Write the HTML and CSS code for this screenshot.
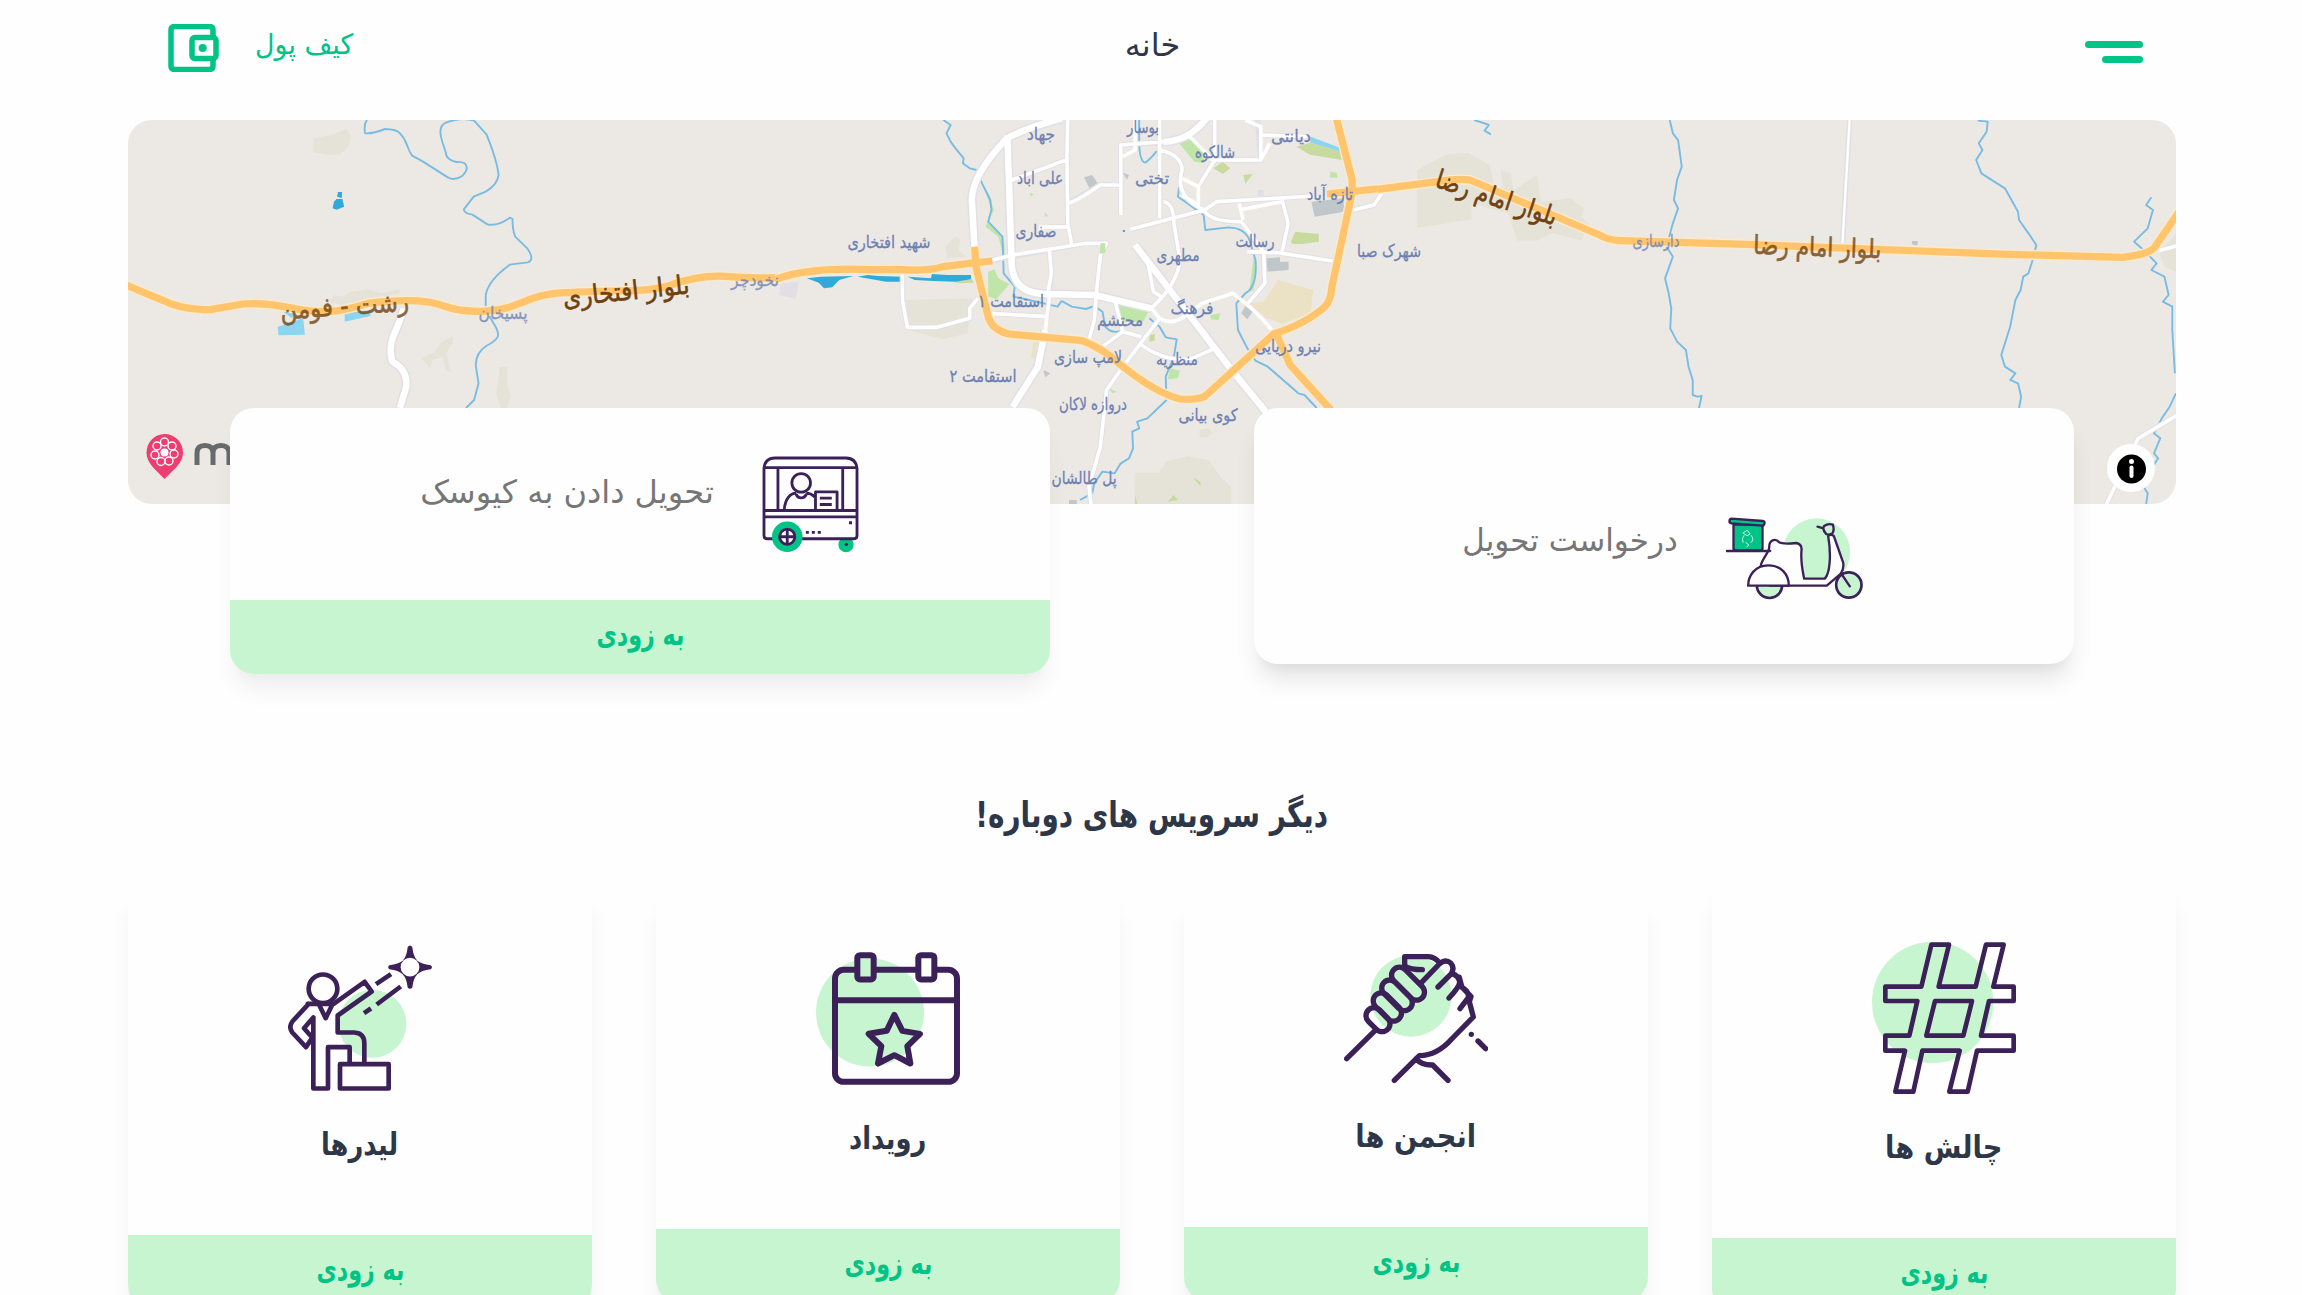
FILE: index.html
```html
<!DOCTYPE html>
<html lang="fa" dir="rtl">
<head>
<meta charset="utf-8">
<title>خانه</title>
<link rel="stylesheet" href="styles.css">
</head>
<body>
<div class="page">
  <header class="topbar">
    <button class="menu" aria-label="منو"><span class="menu-line"></span><span class="menu-line short"></span></button>
    <h1 class="title">خانه</h1>
    <a class="wallet" href="#">
      <span class="wallet-label">کیف پول</span>
      <svg class="wallet-icon" viewBox="0 0 51 48"><path d="M45 13V6Q45 2.5 41 2.5H7Q3 2.5 3 6V42Q3 45.500 7 45.500H41Q45 45.500 45 42V35"/><rect x="24" y="13.500" width="24" height="21" rx="3"/><circle cx="34.700" cy="24" r="4"/></svg>
    </a>
  </header>

  <section class="map">
    <svg class="map-canvas" viewBox="0 0 2048 384" direction="ltr">
      <!-- west of the city -->
      <g transform="translate(-28 -120) scale(.44643 .33333)">
        <path class="land" d="M478 415L520 404 552 386 563 412 556 440 536 464 505 464 478 456ZM510 905L525 885 545 890 560 875 600 868 630 880 670 868 672 880 600 900 540 915ZM720 1075L750 1055 765 1025 790 1008 790 1030 776 1060 788 1120 775 1110 768 1070 745 1080 740 1105ZM895 1100H912V1150L920 1190 912 1224H898L888 1185Z"/>
        <path class="lake" d="M531 590L533 576H542V594ZM524 605L530 597H543L547 620 530 629 521 625Z"/>
        <path class="pond" d="M398 980L455 955 459 1004 400 1006ZM548 940L606 930V948L548 965ZM410 935L440 930 430 955Z"/>
        <path class="plot" d="M1528 850L1564 845 1558 895 1521 885Z"/>
        <path class="river" d="M598 360Q590 375 594 400Q610 402 638 387Q665 388 672 400C690 425 685 440 699 467L720 482 780 533Q795 543 812 527Q828 505 817 490Q808 484 798 486Q775 480 774 455C762 410 755 380 775 368Q810 350 838 362L866 404C880 450 890 490 893 525Q890 555 864 575L837 590 815 628Q815 640 834 644L868 673Q890 680 918 653L924 657Q924 690 930 710L957 745Q975 780 958 787L918 794Q870 840 864 885V920C870 960 895 980 891 1010Q885 1025 865 1038Q840 1060 842 1100L848 1150 838 1200 820 1224"/>
        <path class="road-edge wide" d="M680 925C670 990 640 1020 655 1085Q690 1110 686 1160L672 1224"/>
        <path class="road wide" d="M680 925C670 990 640 1020 655 1085Q690 1110 686 1160L672 1224"/>
        <path class="highway-edge" d="M40 845L130 895Q190 935 250 928L320 912Q370 907 420 922C500 945 540 935 600 910Q720 890 770 918C830 945 900 935 940 910Q1000 875 1050 878C1150 868 1230 880 1280 855Q1340 825 1400 829C1470 835 1530 840 1580 815"/>
        <path class="highway" d="M40 845L130 895Q190 935 250 928L320 912Q370 907 420 922C500 945 540 935 600 910Q720 890 770 918C830 945 900 935 940 910Q1000 875 1050 878C1150 868 1230 880 1280 855Q1340 825 1400 829C1470 835 1530 840 1580 815"/>
      </g>
      <!-- city -->
      <g transform="translate(652 -20) scale(.40816 .33333)">
        <path class="land" d="M405 440L430 408 442 420 438 450 455 470 410 475ZM305 600L470 595 460 700 400 718 312 690ZM868 1118H930L945 1085 1000 1068 1050 1080 1080 1130 1105 1160V1212H868ZM1027 990L1050 984 1060 1000 1045 1014 1028 1010Z"/>
        <path class="sand" d="M1150 610L1185 605 1220 540 1306 570 1300 640 1230 672 1185 650ZM620 725H632L625 775H615Z"/>
        <path class="park" d="M975 125L1005 112 1035 140 1040 190 1015 185ZM510 515L525 508 535 535 562 553 530 597 510 590ZM822 605L905 630 890 665 835 665ZM495 245L515 290 524 330 510 370 535 395 550 430V480L535 410 503 380 520 335ZM956 805L980 812 975 835 950 838ZM1055 645L1078 640 1075 660 1055 658ZM1348 215L1365 218V233H1348ZM1160 470L1168 500 1160 570 1150 575ZM805 865L825 875 815 880ZM648 335L657 348 650 350ZM612 278L622 283 615 290Z"/>
        <path class="grass" d="M1265 140L1300 128 1376 155V180L1330 170 1300 165ZM1062 205L1085 185 1103 205 1085 222ZM1252 425L1262 395 1320 402V425L1280 432 1255 432ZM1135 225L1158 222 1140 252ZM905 705L918 702V722L905 725ZM425 545L470 538 475 548 440 550ZM1010 1130L1030 1145V1158ZM870 1185L876 1212H870ZM950 1205L965 1185 975 1200Z"/>
        <path class="building" d="M745 232L765 225 778 250 758 265ZM1302 305L1380 295 1383 335 1310 350ZM1189 475L1225 472V485H1246V510L1195 515ZM1130 640L1140 618 1158 635 1145 658ZM840 218L855 225 850 240ZM645 810L662 820 650 832ZM708 1200H727V1212H708Z"/>
        <path class="plot" d="M0 555L45 560 38 597 0 585ZM1170 270H1185V288H1170Z"/>
        <path class="lake" d="M66 535L100 530 180 528 145 540 128 562 108 565 95 548ZM190 530L215 525 240 528 300 530 295 545 260 545ZM313 530L370 535 372 522 410 525 468 525V538L430 545 375 543 330 540ZM840 390H845V396H840Z"/>
        <path class="pond" d="M1300 110L1375 145V155L1300 128Z"/>
        <path class="river" d="M400 60L418 75 408 100 418 125 430 145 450 175 448 190 465 205 482 210 495 250 515 300 518 330 510 365 545 410 548 520 575 560 572 590 610 600 680 620 690 603 715 620 750 627 770 618 790 635 797 680Q815 705 840 690M880 60V120Q880 185 895 188Q905 180 922 155H945Q985 175 982 210L975 290Q1010 320 1038 345L1042 390 1100 382Q1140 385 1150 420L1165 480Q1170 560 1140 580L1118 610 1122 690 1145 745 1165 782 1195 800 1270 880 1285 885 1315 924M905 655L930 680 945 712 972 718 965 770 945 830 947 900 900 955 875 965 880 985 863 995 865 1045 855 1075 835 1090 820 1120 790 1115 770 1150 765 1180 735 1200"/>
        <path class="road-edge wide" d="M690 55Q600 85 556 115Q470 225 470 300L477 450M557 105L568 500Q575 580 650 582L770 585 910 625M650 690L632 800 570 920M870 435L1110 815 1190 935M1045 55Q1000 125 940 125"/>
        <path class="road-edge" d="M705 60L703 170 705 370 715 435M568 240L705 178M520 480L750 430 800 430 785 465 775 580 770 660 757 720M705 310L785 255H835M835 345V135L940 125M930 60V355M858 388L1040 330 1070 305 1310 288M1065 60L1065 180 1025 260M1170 60L1178 180H1060M1178 105L1290 110M930 150Q985 165 985 210Q965 290 1040 330Q1050 365 1130 365L1185 455 1188 550 1145 612M1145 455L1220 458 1365 485M1230 300L1245 370 1230 455M1475 280L1455 315 1405 330M940 305Q965 310 965 370L980 480Q975 550 910 625M900 480L915 575 935 590M660 450L665 520 655 650 515 640M300 520V600L312 682H385L465 655V625L485 595M820 600L840 695 790 740M930 655L840 800 800 870 785 1040 757 1160 762 1212M840 695L885 710M885 735Q950 790 1010 775L1065 745M655 380L705 380"/>
        <path class="road wide" d="M690 55Q600 85 556 115Q470 225 470 300L477 450M557 105L568 500Q575 580 650 582L770 585 910 625M650 690L632 800 570 920M870 435L1110 815 1190 935M1045 55Q1000 125 940 125"/>
        <path class="road" d="M910 625L930 655Q965 680 1000 640L1035 610 1110 580Q1170 635 1205 690M660 590L650 690M705 60L703 170 705 370 715 435M568 240L705 178M520 480L570 465 750 430 800 430 785 465 775 580 770 660 757 720M705 310Q725 305 785 255H835M835 345V135L940 125M930 60V355M858 388L1040 330 1070 305 1310 288M1065 60L1065 180 1025 260M870 60V150L840 170M1140 60L1178 80V180L1200 130M1178 180L1060 180 1000 105M1178 105L1290 110M930 150Q985 165 985 210Q965 290 1040 330Q1050 365 1130 365L1185 455 1188 550 1145 612M985 235L1025 260V315L985 285M1125 310L1135 360M1125 330L1230 305M1145 455L1220 458 1365 485M1230 300L1245 370 1230 455M1475 280L1455 315 1405 330M940 305Q965 310 965 370L980 480Q975 550 910 625M900 480L915 575 935 590M660 450L665 520 655 590M655 650L515 640M300 520V600L312 682H385L465 655V625L485 595M820 600L840 695 790 740M930 655L840 800 800 870 785 1040 757 1160 762 1212M840 695L885 710M885 735Q950 790 1010 775L1065 745M635 382L705 380"/>
        <path class="park" d="M785 430H797V458L784 462Z"/>
        <path class="highway-edge" d="M-10 538Q30 520 70 515C150 500 200 512 290 508Q360 515 400 500L480 488 520 483M477 440L480 500 510 650Q520 690 560 702L740 722Q790 745 830 790Q920 880 980 897Q1020 900 1040 890L1210 702Q1290 670 1335 620Q1350 600 1352 560L1365 488 1402 275V240L1362 50M1340 282L1580 252M1215 700L1250 795 1350 930"/>
        <path class="highway" d="M-10 538Q30 520 70 515C150 500 200 512 290 508Q360 515 400 500L480 488 520 483M477 440L480 500 510 650Q520 690 560 702L740 722Q790 745 830 790Q920 880 980 897Q1020 900 1040 890L1210 702Q1290 670 1335 620Q1350 600 1352 560L1365 488 1402 275V240L1362 50M1340 282L1580 252M1215 700L1250 795 1350 930"/>
      </g>
      <!-- east of the city -->
      <g transform="translate(1252 -20) scale(.52296 .33333)">
        <path class="land" d="M71 210L125 165 168 158 210 195 220 270 235 260 230 210 250 220 255 270 300 225 308 305 365 295 390 325 385 350 400 370 385 422 330 400 300 422H262L245 340 220 330 175 310V358L71 384ZM1490 460L1522 400V515L1500 500Z"/>
        <path class="building" d="M1017 423H1028V436H1022L1017 432Z"/>
        <path class="river" d="M180 60L200 70 208 75 200 92 212 103M554 60L560 100 570 120 577 200 568 240 562 300 570 325 560 370 548 440 560 470 545 535 552 580 557 625 555 685 568 725 585 750 590 800 598 840V885L607 890 615 888 610 924M1143 62L1162 65 1160 95 1145 130 1152 150 1140 180 1150 220 1195 265 1220 335 1222 360 1240 400 1255 435 1248 480 1240 520 1230 530 1225 570 1215 600 1205 680 1188 765 1195 800 1215 820 1205 840 1220 850 1226 890 1222 924M1475 292L1465 315 1478 330 1468 385 1442 425 1460 450 1485 490 1475 510 1500 530 1508 585 1497 605 1515 620 1515 690 1520 820M1522 880L1510 920 1495 955 1480 1000 1492 1015 1480 1060 1488 1075 1465 1130 1460 1160 1468 1180 1465 1212"/>
        <path class="road-edge" d="M898 60L884 440M1488 452L1530 435M1530 940L1450 1015 1388 1215"/>
        <path class="road thin" d="M898 60L884 440"/>
        <path class="road" d="M1488 452L1530 435M1530 940L1450 1015 1388 1215"/>
        <path class="highway-edge" d="M-5 268L110 245Q150 235 172 240L420 405Q435 420 460 422L700 433 1200 463 1420 472Q1465 465 1480 445L1530 330"/>
        <path class="highway" d="M-5 268L110 245Q150 235 172 240L420 405Q435 420 460 422L700 433 1200 463 1420 472Q1465 465 1480 445L1530 330"/>
      </g>
      <g class="places">
        <text x="913" y="20" textLength="28" lengthAdjust="spacingAndGlyphs">جهاد</text>
        <text x="1015" y="13" textLength="32" lengthAdjust="spacingAndGlyphs">بوسار</text>
        <text x="912" y="64" textLength="46" lengthAdjust="spacingAndGlyphs">علی اباد</text>
        <text x="1024" y="64" textLength="34" lengthAdjust="spacingAndGlyphs">تختی</text>
        <text x="1087" y="38" textLength="40" lengthAdjust="spacingAndGlyphs">شالکوه</text>
        <text x="1163" y="22" textLength="40" lengthAdjust="spacingAndGlyphs">دیانتی</text>
        <text x="1202" y="80" textLength="46" lengthAdjust="spacingAndGlyphs">تازه آباد</text>
        <text x="761" y="128" textLength="83" lengthAdjust="spacingAndGlyphs">شهید افتخاری</text>
        <text x="908" y="117" textLength="41" lengthAdjust="spacingAndGlyphs">صفاری</text>
        <text x="1127" y="127" textLength="39" lengthAdjust="spacingAndGlyphs">رسالت</text>
        <text x="1050" y="141" textLength="43" lengthAdjust="spacingAndGlyphs">مطهری</text>
        <text x="1261" y="137" textLength="64" lengthAdjust="spacingAndGlyphs">شهرک صبا</text>
        <text x="883" y="187" textLength="66" lengthAdjust="spacingAndGlyphs">استقامت ۱</text>
        <text x="992" y="206" textLength="46" lengthAdjust="spacingAndGlyphs">محتشم</text>
        <text x="1064" y="194" textLength="43" lengthAdjust="spacingAndGlyphs">فرهنگ</text>
        <text x="960" y="243" textLength="68" lengthAdjust="spacingAndGlyphs">لامپ سازی</text>
        <text x="1049" y="245" textLength="42" lengthAdjust="spacingAndGlyphs">منظریه</text>
        <text x="1160" y="232" textLength="66" lengthAdjust="spacingAndGlyphs">نیرو دریایی</text>
        <text x="855" y="262" textLength="67" lengthAdjust="spacingAndGlyphs">استقامت ۲</text>
        <text x="965" y="290" textLength="68" lengthAdjust="spacingAndGlyphs">دروازه لاکان</text>
        <text x="1080" y="301" textLength="59" lengthAdjust="spacingAndGlyphs">کوی بیانی</text>
        <text x="956" y="364" textLength="65" lengthAdjust="spacingAndGlyphs">پل طالشان</text>
        <text class="faded" x="627" y="166" textLength="48" lengthAdjust="spacingAndGlyphs">نخودچر</text>
        <text class="faded" x="375" y="199" textLength="49" lengthAdjust="spacingAndGlyphs">پسیخان</text>
        <text class="faded" x="1528" y="127" textLength="47" lengthAdjust="spacingAndGlyphs">دارسازی</text>
      </g>
      <g class="streets">
        <text transform="translate(499 180) rotate(-6)" textLength="127" lengthAdjust="spacingAndGlyphs">بلوار افتخاری</text>
        <text class="faded" transform="translate(217 195) rotate(-4)" textLength="129" lengthAdjust="spacingAndGlyphs">رشت - فومن</text>
        <text transform="translate(1366 86) rotate(18)" textLength="126" lengthAdjust="spacingAndGlyphs">بلوار امام رضا</text>
        <text class="faded" transform="translate(1689 136) rotate(2)" textLength="128" lengthAdjust="spacingAndGlyphs">بلوار امام رضا</text>
      </g>
      <g class="brand">
        <path class="pin" d="M36.500 314A18.500 18.500 0 0 1 55 333C55 343 45 350 36.500 359C28 350 18.500 343 18.500 333A18.500 18.500 0 0 1 36.500 314Z"/>
        <g class="petals">
          <circle cx="36.500" cy="322" r="4"/><circle cx="44" cy="326" r="4"/><circle cx="46" cy="334" r="4"/><circle cx="41" cy="341" r="4"/><circle cx="33" cy="341.500" r="4"/><circle cx="27" cy="335" r="4"/><circle cx="29" cy="326" r="4"/>
        </g>
        <circle class="core" cx="36.500" cy="332.500" r="4"/>
        <path class="mark" d="M69 345V333Q69 325.500 77 325.500Q85 325.500 85 333V345M85 333Q85 325.500 93 325.500Q101 325.500 101 333V345"/>
      </g>
      <g class="info"><circle cx="2003" cy="348" r="24"/><circle class="info-disc" cx="2003.500" cy="349" r="14.500"/><path d="M2003.500 347.500V356"/><circle cx="2003.500" cy="341.500" r="2.500"/></g>
    </svg>
  </section>

  <section class="actions">
    <a class="action raised" href="#">
      <div class="action-main delivery">
        <svg class="scooter" viewBox="34 32 410 252">
          <circle class="mint" cx="305" cy="140" r="101"/>
          <g class="ink" stroke-width="7">
            <circle class="mint-fill" cx="164" cy="240" r="38" stroke-width="8"/>
            <path class="white-fill" d="M138 180C142 160 160 145 163 128C162 103 182 98 193 111Q203 117 245 113Q262 117 260 135C257 170 262 190 268 220H330C345 205 350 150 340 92Q348 85 357 92L385 172Q388 190 378 205L336 241H165Z"/>
            <path class="white-fill" d="M100 241C100 212 120 180 160 180C200 180 222 208 222 241Z"/>
            <circle class="mint-fill" cx="402" cy="239" r="38" stroke-width="8"/>
            <path d="M380 206L405 243M308 64L326 69"/>
            <path class="mint-fill" d="M328 62Q340 53 354 58Q360 75 352 85Q342 90 334 86Q326 77 325 68Z"/>
            <path class="green-fill" d="M56 58H143V129Q143 135 137 135H62Q56 135 56 129Z"/>
            <path class="green-fill" d="M50 40L144 47Q150 48 149 54Q147 61 142 61L50 54Q43 53 44 46Q45 40 50 40Z"/>
            <path d="M36 137H166"/>
          </g>
          <path class="logo-line" d="M88 90Q79 100 85 112M109 90Q119 103 108 112M84 83L97 75 106 86 97 91ZM92 111L102 119 95 125"/>
        </svg>
        <span class="action-text">درخواست تحویل</span>
      </div>
    </a>
    <a class="action" href="#">
      <div class="action-main">
        <svg class="kiosk" viewBox="34 31 290 292">
          <circle class="green" cx="286" cy="298" r="23"/>
          <g class="ink" stroke-width="8.5">
            <path class="white-fill" d="M39 68Q42 37 72 37H286Q316 38 319 68V270Q319 280 309 280H49Q39 280 39 270Z"/>
            <path d="M39 66H319M39 195H319M39 214H319M81 66V195M276 66V195"/>
            <circle cx="151" cy="112" r="28"/>
            <path d="M100 193C102 162 117 143 136 143M166 143Q180 143 192 154M135 145Q140 157 151 157Q162 157 167 145"/>
            <path class="white-fill" d="M194 139H259V195H194Z"/>
            <path d="M207 158H243M207 177H243M165 261H174M183 261H192M201 261H210M295 232H304"/>
          </g>
          <circle class="green" cx="109" cy="274" r="46"/>
          <circle class="white-fill" cx="109" cy="274" r="20"/>
          <g class="ink" stroke-width="8.5"><circle cx="109" cy="274" r="23"/><path d="M109 251V297M86 274H132"/></g>
          <circle class="ink-solid" cx="287" cy="297" r="5"/>
        </svg>
        <span class="action-text kiosk-text">تحویل دادن به کیوسک</span>
      </div>
      <div class="soon"><span class="soon-label">به زودی</span></div>
    </a>
  </section>

  <h2 class="heading"><span class="heading-label">دیگر سرویس های دوباره!</span></h2>

  <section class="services">
    <a class="service" href="#">
      <svg class="icon-hash" viewBox="546 246 432 456">
        <circle class="mint" cx="728" cy="427" r="182"/>
        <path class="ink" stroke-width="14" d="M724 254H777L746 380H857L888 254H941L910 380H971V423H897L873 527H971V572H861L833 695H778L809 572H697L670 695H616L645 572H586V527H658L682 423H586V380H694ZM735 423H846L820 527H709Z"/>
      </svg>
      <h3 class="name">چالش ها</h3>
      <div class="soon"><span class="soon-label">به زودی</span></div>
    </a>
    <a class="service" href="#">
      <svg class="icon-hands" viewBox="522 282 432 387">
        <circle class="mint" cx="723" cy="408" r="122"/>
        <g class="ink" stroke-width="16">
          <rect x="-41" y="-24" width="82" height="48" rx="24" transform="translate(624 479) rotate(45)"/>
          <rect x="-50" y="-24" width="100" height="48" rx="24" transform="translate(652 441) rotate(45)"/>
          <rect x="-55" y="-24" width="110" height="48" rx="24" transform="translate(681 406) rotate(45)"/>
          <rect x="-60" y="-24" width="120" height="48" rx="24" transform="translate(714 371) rotate(45)"/>
          <path d="M530 596L615 512M704 322V290H775Q795 291 808 308M704 318Q720 329 757 329M752 370L808 312Q826 296 842 309Q856 325 842 343L804 381M846 341Q866 347 869 366Q869 380 837 414M868 352L876 382Q898 395 895 413L870 446M880 385L903 410 898 425 910 471L845 537Q802 586 748 587L673 661M738 596Q755 616 788 615L834 661M924 543L947 566M904 523V523"/>
        </g>
      </svg>
      <h3 class="name">انجمن ها</h3>
      <div class="soon"><span class="soon-label">به زودی</span></div>
    </a>
    <a class="service" href="#">
      <svg class="icon-event" viewBox="528 516 432 398">
        <circle class="mint" cx="690" cy="697" r="162"/>
        <g class="ink" stroke-width="18">
          <rect x="585" y="569" width="366" height="336" rx="26"/>
          <path d="M585 660H951"/>
          <rect class="mint-fill" x="652" y="525" width="49" height="73" rx="8"/>
          <rect class="white-fill" x="835" y="525" width="48" height="73" rx="8"/>
          <path d="M763 704L787 752 840 761 802 798 811 850 763 825 714 850 724 798 686 761 740 752Z"/>
        </g>
      </svg>
      <h3 class="name narrow">رویداد</h3>
      <div class="soon"><span class="soon-label">به زودی</span></div>
    </a>
    <a class="service" href="#">
      <svg class="icon-leader" viewBox="504 256 432 437">
        <circle class="mint" cx="757" cy="492" r="102"/>
        <g class="ink" stroke-width="14">
          <circle cx="609" cy="387" r="43"/>
          <path d="M566 432L517 485Q505 502 517 518L558 562 574 538M580 473L552 505 574 530M563 432H641L734 366 755 395 653 467V518H703Q733 520 733 550V612M580 473V686H624V562H689V612M598 436L617 475 636 436"/>
          <rect x="660" y="613" width="146" height="73"/>
          <path class="dash" d="M768 373L813 343M770 434L842 380M732 460L753 446"/>
        </g>
        <path class="ink-solid" d="M863 262Q870 252 877 262Q880 290 892 303Q904 313 932 316Q940 322 932 328Q904 331 892 343Q880 355 877 383Q870 391 863 383Q860 355 848 343Q836 331 808 328Q801 322 808 316Q836 313 848 303Q860 290 863 262Z"/>
        <circle class="white-fill" cx="870" cy="322" r="28"/>
      </svg>
      <h3 class="name narrow">لیدرها</h3>
      <div class="soon"><span class="soon-label">به زودی</span></div>
    </a>
  </section>
</div>
</body>
</html>
```
FILE: styles.css
```css
* { box-sizing: border-box; }
html { height: 100%; overflow: hidden; }
body {
  margin: 0;
  height: 100%;
  overflow: hidden;
  background: #fefefe;
  color: #2d3748;
  font-family: "DejaVu Sans", "Noto Sans", sans-serif;
}
a { color: inherit; text-decoration: none; }
h1, h2, h3 { margin: 0; font-weight: 400; }
svg { display: block; flex: none; }

.page { width: 2048px; margin: 0 126px 0 128px; }

.topbar {
  height: 120px;
  display: grid;
  grid-template-columns: 1fr auto 1fr;
  align-items: start;
  padding: 0 33px 0 40px;
}
.menu {
  justify-self: start;
  margin: 41px 0 0;
  padding: 0;
  border: 0;
  background: none;
  display: flex;
  flex-direction: column;
  align-items: flex-start;
  gap: 8px;
  width: 58px;
}
.menu-line { width: 58px; height: 7px; border-radius: 4px; background: #00c386; }
.menu-line.short { width: 41px; margin-right: 0; }
.title { padding-top: 25px; font-size: 32px; line-height: 40px; transform: translateX(-3px); }
.wallet {
  justify-self: end;
  display: flex;
  align-items: flex-start;
  gap: 36px;
  padding-top: 24px;
  color: #00c386;
  font-size: 28px;
  line-height: 40px;
}
.wallet-label { white-space: nowrap; transform: scaleX(.96); transform-origin: left; margin-top: 1px; }
.wallet-icon { width: 51px; height: 48px; fill: none; stroke: #00c386; stroke-width: 5.500; }
.wallet-icon circle { fill: #00c386; stroke: none; }

.map { height: 384px; border-radius: 24px; overflow: hidden; background: #ece9e4; }
.map-canvas { width: 2048px; height: 384px; }
.map-canvas path { vector-effect: non-scaling-stroke; stroke-linejoin: round; }
.land { fill: #e5e3d8; }
.sand { fill: #ebe2c6; }
.park { fill: #bfe5a8; }
.grass { fill: #c9da9e; }
.building { fill: #c0c7ca; }
.plot { fill: #e1dfe5; }
.lake { fill: #30abd9; }
.pond { fill: #8bd5f0; }
.river { fill: none; stroke: #79bce3; stroke-width: 1.900; }
.road-edge { fill: none; stroke: #e1dfe5; stroke-width: 5.500; }
.road { fill: none; stroke: #fff; stroke-width: 3.600; }
.road.thin { stroke-width: 2.400; }
.road-edge.wide { stroke-width: 9.500; }
.road.wide { stroke-width: 6.500; }
.highway-edge { fill: none; stroke: #faeace; stroke-width: 10; }
.highway { fill: none; stroke: #ffc46c; stroke-width: 7.200; }
.places, .streets { direction: rtl; text-anchor: middle; }
.places { fill: #6c80b2; stroke: #6c80b2; stroke-width: .3; font-size: 17px; }
.streets { fill: #70410f; stroke: #70410f; stroke-width: .6; font-size: 26px; }
.faded { opacity: .8; }
.pin { fill: #ee3d70; }
.petals { fill: none; stroke: #fff; stroke-width: 1.400; }
.core { fill: #fff; }
.mark { fill: none; stroke: #666a6b; stroke-width: 5; }
.info { fill: #fff; }
.info .info-disc { fill: #000; }
.info path { stroke: #fff; stroke-width: 4; stroke-linecap: round; }

.actions {
  position: relative;
  display: flex;
  justify-content: space-around;
  align-items: flex-start;
  margin-top: -96px;
  height: 362px;
}
.action {
  width: 40%;
  border-radius: 24px;
  overflow: hidden;
  background: #fefefe;
  box-shadow: 0 20px 25px -5px rgba(0, 0, 0, .06), 0 10px 10px -5px rgba(0, 0, 0, .025);
}
.action.raised { box-shadow: 0 20px 25px -5px rgba(0, 0, 0, .1), 0 10px 10px -5px rgba(0, 0, 0, .04); }
.action-main {
  height: 192px;
  display: flex;
  align-items: center;
  justify-content: center;
  gap: 48px;
  padding-right: 1px;
}
.action-main.delivery { height: 256px; padding: 44px 3px 0 0; }
.action-text { color: #767676; font-size: 32px; line-height: 48px; padding-bottom: 36px; white-space: nowrap; }
.delivery .action-text { font-size: 31px; }
.action-text.kiosk-text { padding-bottom: 24px; }
.scooter { width: 137px; height: 84px; }
.kiosk { width: 97px; height: 97px; }
.soon {
  height: 74px;
  display: flex;
  align-items: center;
  justify-content: center;
  align-self: stretch;
  background: #c7f5d0;
  color: #00c386;
  font-size: 30px;
  font-weight: 700;
}
.soon-label { white-space: nowrap; transform: scaleX(.74); padding-bottom: 5px; }

.heading { height: 108px; font-size: 36px; line-height: 90px; font-weight: 700; text-align: center; }
.heading-label { display: inline-block; white-space: nowrap; transform: scaleX(.775); }
.services { display: grid; grid-template-columns: repeat(4, 464px); gap: 64px; align-items: center; }
.service {
  display: flex;
  flex-direction: column;
  align-items: center;
  padding-top: 64px;
  border-radius: 24px;
  overflow: hidden;
  background: #fefefe;
  box-shadow: 0 20px 25px -5px rgba(0, 0, 0, .07), 0 10px 10px -5px rgba(0, 0, 0, .03);
}
.service svg { width: 144px; }
.icon-hash { height: 152px; }
.icon-hands { height: 129px; }
.icon-event { height: 133px; }
.icon-leader { height: 146px; }
.name {
  margin: 29px 0 67px;
  height: 48px;
  font-size: 31px;
  line-height: 48px;
  font-weight: 700;
  white-space: nowrap;
  transform: scaleX(.88);
}
.name.narrow { transform: scaleX(.83); }

.mint { fill: #c7f5d0; }
.green { fill: #00c386; }
.ink { fill: none; stroke: #3c2058; stroke-linejoin: round; stroke-linecap: round; }
.kiosk .ink { stroke-linecap: butt; }
.mint-fill { fill: #c7f5d0; }
.white-fill { fill: #fefefe; }
.green-fill { fill: #00c386; }
.dash { stroke-linecap: butt; }
.ink-solid { fill: #3c2058; }
.logo-line { fill: none; stroke: #fff; stroke-width: 2.500; }

/* the page box sits one pixel right of centre */
html[dir="rtl"] .page { margin-right: 126px; margin-left: auto; }
```
